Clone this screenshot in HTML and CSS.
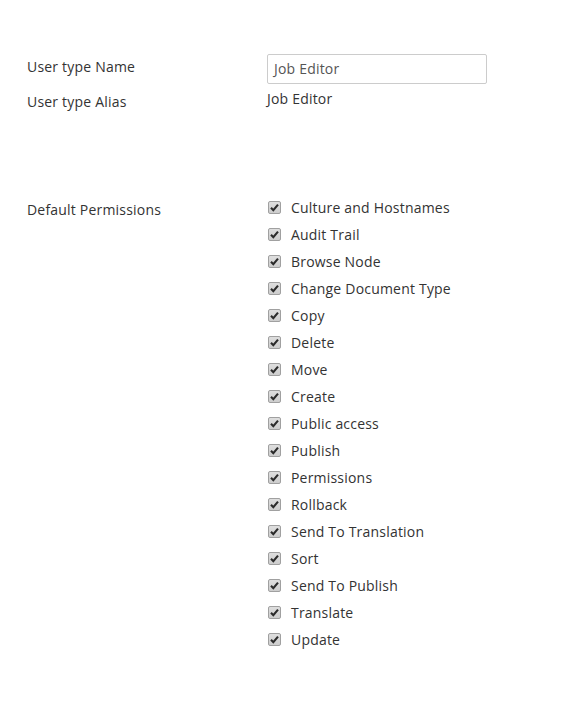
FILE: index.html
```html
<!DOCTYPE html>
<html>
<head>
<meta charset="utf-8">
<link rel="stylesheet" href="styles.css">
</head>
<body>
<div class="form">
  <div class="row row-name">
    <div class="label label-input">User type Name</div>
    <div class="control"><div class="input">Job Editor</div></div>
  </div>
  <div class="row row-alias">
    <div class="label label-alias">User type Alias</div>
    <div class="control value">Job Editor</div>
  </div>
  <div class="row row-perms">
    <div class="label label-perms">Default Permissions</div>
    <ul class="perms">
      <li><span class="cb"><svg viewBox="0 0 13 13" width="13" height="13"><path d="M3 6.8 L5.3 9.2 L10 3.6" fill="none" stroke="#2b2b2b" stroke-width="2.1"/></svg></span>Culture and Hostnames</li>
      <li><span class="cb"><svg viewBox="0 0 13 13" width="13" height="13"><path d="M3 6.8 L5.3 9.2 L10 3.6" fill="none" stroke="#2b2b2b" stroke-width="2.1"/></svg></span>Audit Trail</li>
      <li><span class="cb"><svg viewBox="0 0 13 13" width="13" height="13"><path d="M3 6.8 L5.3 9.2 L10 3.6" fill="none" stroke="#2b2b2b" stroke-width="2.1"/></svg></span>Browse Node</li>
      <li><span class="cb"><svg viewBox="0 0 13 13" width="13" height="13"><path d="M3 6.8 L5.3 9.2 L10 3.6" fill="none" stroke="#2b2b2b" stroke-width="2.1"/></svg></span>Change Document Type</li>
      <li><span class="cb"><svg viewBox="0 0 13 13" width="13" height="13"><path d="M3 6.8 L5.3 9.2 L10 3.6" fill="none" stroke="#2b2b2b" stroke-width="2.1"/></svg></span>Copy</li>
      <li><span class="cb"><svg viewBox="0 0 13 13" width="13" height="13"><path d="M3 6.8 L5.3 9.2 L10 3.6" fill="none" stroke="#2b2b2b" stroke-width="2.1"/></svg></span>Delete</li>
      <li><span class="cb"><svg viewBox="0 0 13 13" width="13" height="13"><path d="M3 6.8 L5.3 9.2 L10 3.6" fill="none" stroke="#2b2b2b" stroke-width="2.1"/></svg></span>Move</li>
      <li><span class="cb"><svg viewBox="0 0 13 13" width="13" height="13"><path d="M3 6.8 L5.3 9.2 L10 3.6" fill="none" stroke="#2b2b2b" stroke-width="2.1"/></svg></span>Create</li>
      <li><span class="cb"><svg viewBox="0 0 13 13" width="13" height="13"><path d="M3 6.8 L5.3 9.2 L10 3.6" fill="none" stroke="#2b2b2b" stroke-width="2.1"/></svg></span>Public access</li>
      <li><span class="cb"><svg viewBox="0 0 13 13" width="13" height="13"><path d="M3 6.8 L5.3 9.2 L10 3.6" fill="none" stroke="#2b2b2b" stroke-width="2.1"/></svg></span>Publish</li>
      <li><span class="cb"><svg viewBox="0 0 13 13" width="13" height="13"><path d="M3 6.8 L5.3 9.2 L10 3.6" fill="none" stroke="#2b2b2b" stroke-width="2.1"/></svg></span>Permissions</li>
      <li><span class="cb"><svg viewBox="0 0 13 13" width="13" height="13"><path d="M3 6.8 L5.3 9.2 L10 3.6" fill="none" stroke="#2b2b2b" stroke-width="2.1"/></svg></span>Rollback</li>
      <li><span class="cb"><svg viewBox="0 0 13 13" width="13" height="13"><path d="M3 6.8 L5.3 9.2 L10 3.6" fill="none" stroke="#2b2b2b" stroke-width="2.1"/></svg></span>Send To Translation</li>
      <li><span class="cb"><svg viewBox="0 0 13 13" width="13" height="13"><path d="M3 6.8 L5.3 9.2 L10 3.6" fill="none" stroke="#2b2b2b" stroke-width="2.1"/></svg></span>Sort</li>
      <li><span class="cb"><svg viewBox="0 0 13 13" width="13" height="13"><path d="M3 6.8 L5.3 9.2 L10 3.6" fill="none" stroke="#2b2b2b" stroke-width="2.1"/></svg></span>Send To Publish</li>
      <li><span class="cb"><svg viewBox="0 0 13 13" width="13" height="13"><path d="M3 6.8 L5.3 9.2 L10 3.6" fill="none" stroke="#2b2b2b" stroke-width="2.1"/></svg></span>Translate</li>
      <li><span class="cb"><svg viewBox="0 0 13 13" width="13" height="13"><path d="M3 6.8 L5.3 9.2 L10 3.6" fill="none" stroke="#2b2b2b" stroke-width="2.1"/></svg></span>Update</li>
    </ul>
  </div>
</div>
</body>
</html>
```
FILE: styles.css
```css
html, body {
  margin: 0;
  padding: 0;
  background: #fff;
}
body {
  font-family: "Open Sans", "Liberation Sans", sans-serif;
  font-size: 14px;
  line-height: 20px;
  letter-spacing: 0.2px;
  color: #333;
}
.form {
  padding: 54px 0 0 27px;
}
.row {
  display: grid;
  grid-template-columns: 240px 1fr;
}
.label-input {
  padding-top: 3px;
}
.input {
  box-sizing: border-box;
  width: 220px;
  height: 30px;
  border: 1px solid #cccccc;
  border-radius: 2px;
  padding: 4px 6px;
  line-height: 20px;
  color: #555;
}
.row-alias {
  margin-top: 5px;
}
.label-alias {
  padding-top: 3px;
}
.row-perms {
  margin-top: 82px;
}
.label-perms {
  padding-top: 6px;
}
.perms {
  list-style: none;
  margin: 0;
  padding: 0;
}
.perms li {
  display: flex;
  align-items: center;
  height: 27px;
}
.cb {
  box-sizing: border-box;
  width: 13px;
  height: 13px;
  margin: 0 10px 0 1px;
  border: 1px solid #a0a0a0;
  border-radius: 2px;
  background: linear-gradient(#dedede, #cdcdcd);
  display: flex;
}
.cb svg {
  margin: -1px;
}
```
